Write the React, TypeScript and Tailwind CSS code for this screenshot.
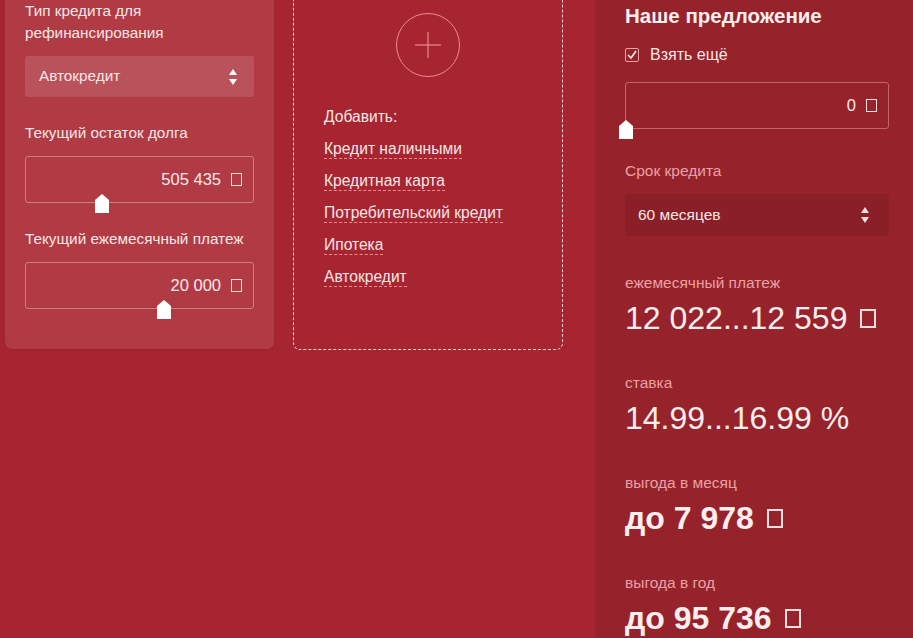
import React from "react";

const font = { fontFamily: '"Liberation Sans", Arial, sans-serif' };

function Tofu({ big = false }: { big?: boolean }) {
  if (big)
    return <span className="inline-block w-[16px] h-[19px] border-2 border-[#f3dede] align-[-1px]" />;
  return <span className="inline-block w-[11px] h-[13px] border-[1.5px] border-[#f3dede] align-[-1px]" />;
}

function Thumb({ left }: { left: number }) {
  return (
    <svg
      className="absolute"
      style={{ left: left - 7, bottom: -11 }}
      width="14"
      height="19"
      viewBox="0 0 14 19"
    >
      <polygon points="7,0 14,6 14,19 0,19 0,6" fill="#ffffff" />
    </svg>
  );
}

function Arrows({ color = "#ffffff" }: { color?: string }) {
  return (
    <svg width="10" height="20" viewBox="0 0 10 20">
      <polygon points="5,2 9,8 1,8" fill={color} />
      <polygon points="1,12 9,12 5,18" fill={color} />
    </svg>
  );
}

function SliderInput({ value, thumb, border }: { value: string; thumb: number; border: string }) {
  return (
    <div className={`relative h-[47px] rounded-[3px] border ${border} flex items-center justify-end pr-[11px] gap-[10px] text-[16.5px] text-[#f8e8e8]`}>
      <span>{value}</span>
      <Tofu />
      <Thumb left={thumb} />
    </div>
  );
}

function LeftCard() {
  return (
    <div className="ml-[5px] w-[269px] h-[349px] shrink-0 bg-[#b03b45] rounded-b-[7px] shadow-[0_1px_2px_rgba(0,0,0,0.08)] px-[20px] text-[15.3px] text-[#f8e6e6]">
      <div className="leading-[22px]">
        Тип кредита для
        <br />
        рефинансирования
      </div>
      <div className="mt-[12px] h-[41px] rounded-[3px] bg-[#b9525b] flex items-center justify-between pl-[14px] pr-[16px]">
        <span>Автокредит</span>
        <Arrows />
      </div>
      <div className="mt-[25px] leading-[22px]">Текущий остаток долга</div>
      <div className="mt-[12px]">
        <SliderInput value="505 435" thumb={76} border="border-[#cf7d84]" />
      </div>
      <div className="mt-[25px] leading-[22px]">Текущий ежемесячный платеж</div>
      <div className="mt-[12px]">
        <SliderInput value="20 000" thumb={138} border="border-[#cf7d84]" />
      </div>
    </div>
  );
}

function AddBox() {
  const items = ["Кредит наличными", "Кредитная карта", "Потребительский кредит", "Ипотека", "Автокредит"];
  return (
    <div className="ml-[19px] w-[270px] h-[350px] shrink-0 border border-t-0 border-dashed border-[#f3d3d5] rounded-b-[7px] flex flex-col">
      <div className="flex justify-center pt-[13px]">
        <div className="w-[64px] h-[64px] rounded-full border border-[#f08890] flex items-center justify-center">
          <svg width="28" height="28" viewBox="0 0 28 28">
            <line x1="14" y1="1" x2="14" y2="27" stroke="#f08890" strokeWidth="1.2" />
            <line x1="1" y1="14" x2="27" y2="14" stroke="#f08890" strokeWidth="1.2" />
          </svg>
        </div>
      </div>
      <div className="mt-[24px] pl-[30px] text-[15.6px] text-[#f8e6e6]">
        <div className="h-[32px] flex items-center">Добавить:</div>
        {items.map((t) => (
          <div key={t} className="h-[32px] flex items-start pt-[7px]">
            <span className="inline-block leading-[18px] border-b border-dashed border-[#f08890]">{t}</span>
          </div>
        ))}
      </div>
    </div>
  );
}

function Stat({ label, value, bold = false }: { label: string; value: string; bold?: boolean }) {
  return (
    <div className="mt-[37px]">
      <div className="leading-[20px] text-[15.5px] text-[#eba0a4]">{label}</div>
      <div className={`mt-[7px] leading-[36px] text-[32px] text-[#fbeeee] flex items-center gap-[13px] ${bold ? "font-bold" : ""}`}>
        <span>{value}</span>
        {value.endsWith("%") ? null : <Tofu big />}
      </div>
    </div>
  );
}

function Offer() {
  return (
    <div className="ml-auto w-[318px] h-full shrink-0 bg-[#96232c] pl-[30px] pr-[24px] pt-[4px]">
      <div className="leading-[24px] text-[20.5px] font-bold text-[#fbeeee]">Наше предложение</div>
      <div className="mt-[17px] h-[20px] flex items-center gap-[11px] text-[16px] text-[#f8e6e6]">
        <span className="w-[14px] h-[14px] rounded-[2px] border border-[#f0a0a6] flex items-center justify-center">
          <svg width="12" height="12" viewBox="0 0 12 12">
            <polyline points="2,6 5,9 10,2" fill="none" stroke="#fbeeee" strokeWidth="1.6" />
          </svg>
        </span>
        <span>Взять ещё</span>
      </div>
      <div className="mt-[17px]">
        <SliderInput value="0" thumb={0} border="border-[#c4646c]" />
      </div>
      <div className="mt-[32px] leading-[20px] text-[15.5px] text-[#eba0a4]">Срок кредита</div>
      <div className="mt-[13px] h-[42px] rounded-[3px] bg-[#8a1f28] flex items-center justify-between pl-[13px] pr-[19px] text-[15.5px] text-[#f8e6e6]">
        <span>60 месяцев</span>
        <Arrows color="#f6dede" />
      </div>
      <Stat label="ежемесячный платеж" value="12 022...12 559" />
      <Stat label="ставка" value="14.99...16.99 %" />
      <Stat label="выгода в месяц" value="до 7 978" bold />
      <Stat label="выгода в год" value="до 95 736" bold />
    </div>
  );
}

export default function App() {
  return (
    <div className="w-[913px] h-[638px] overflow-hidden bg-[#a62530] flex items-start" style={font}>
      <LeftCard />
      <AddBox />
      <Offer />
    </div>
  );
}
